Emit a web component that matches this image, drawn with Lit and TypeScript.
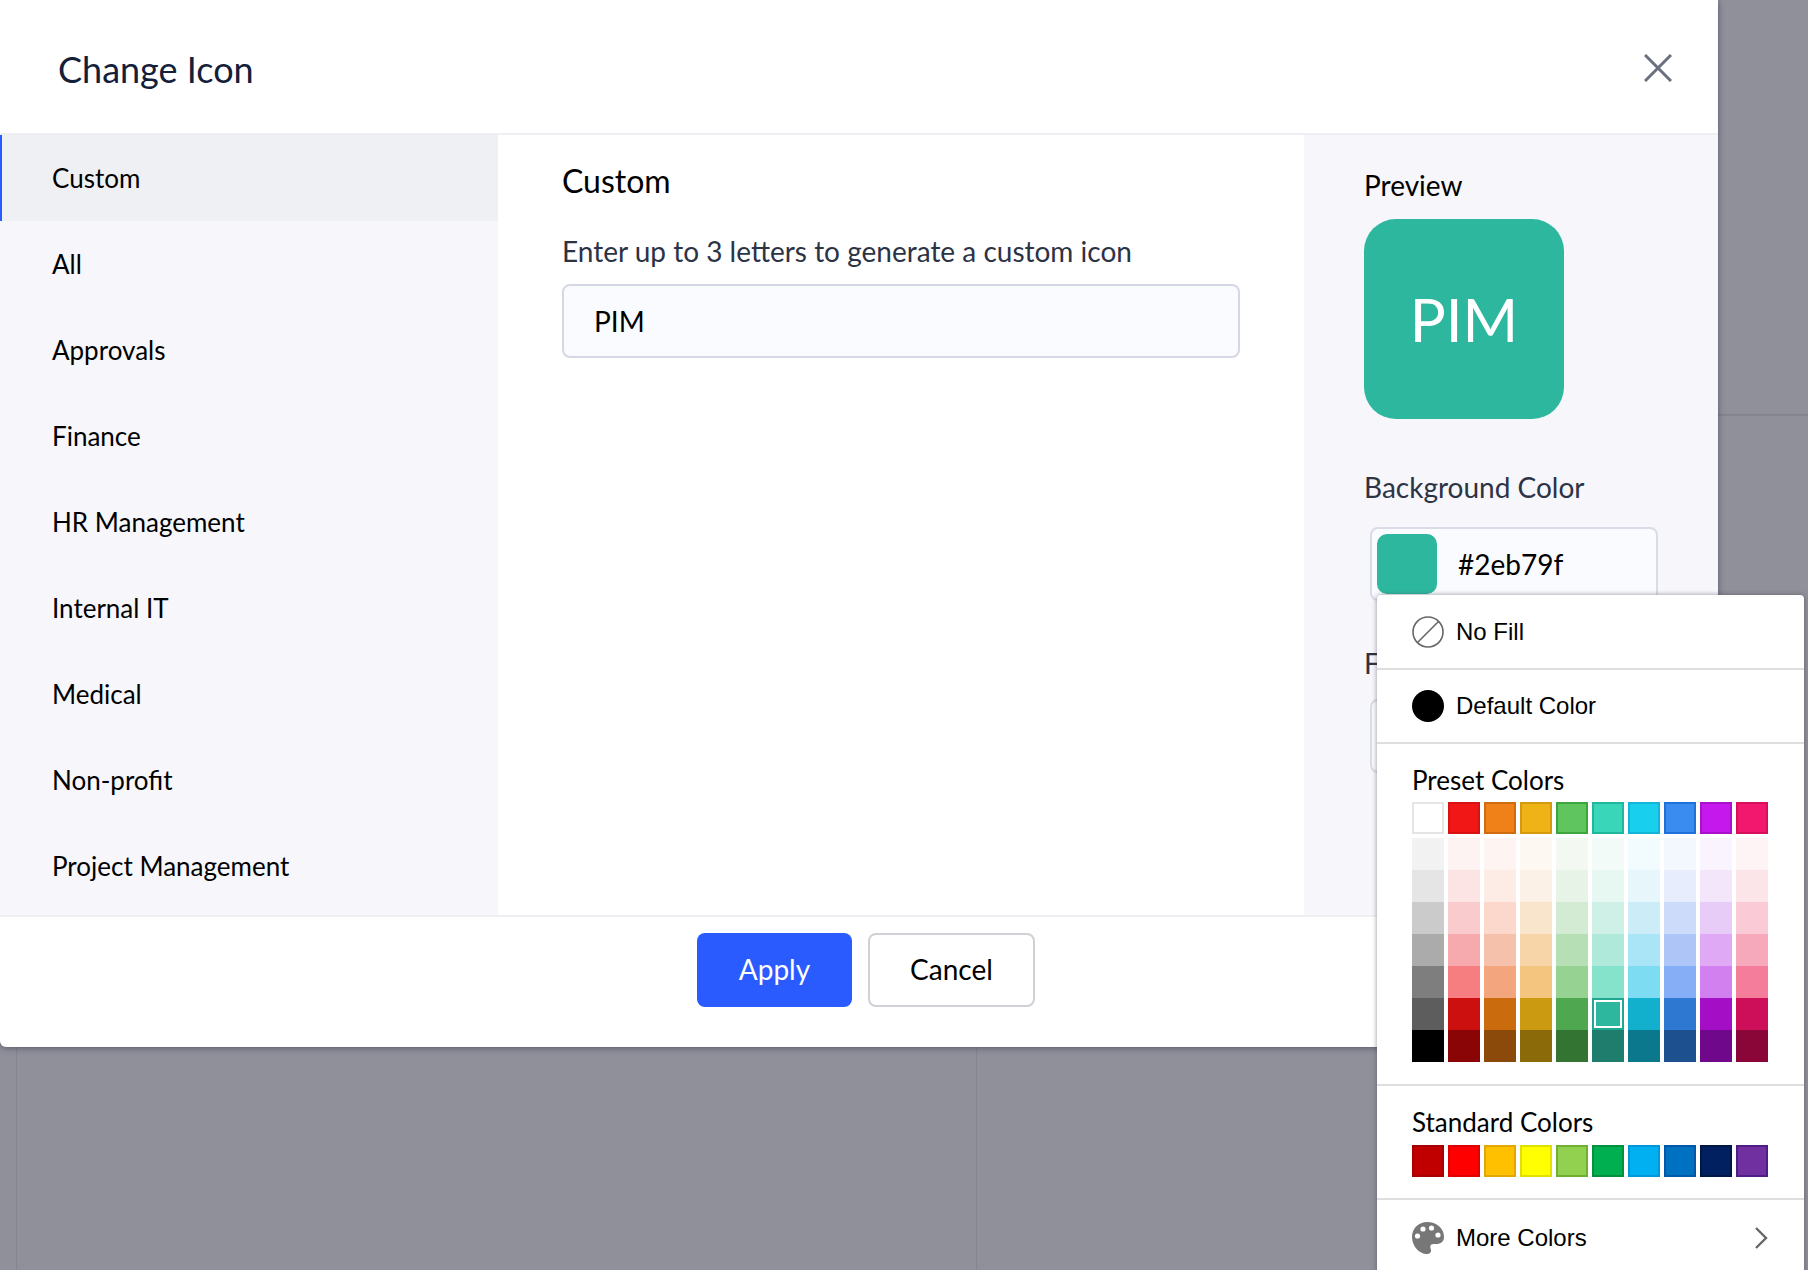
import { LitElement, html, css } from "lit";
import { customElement } from "lit/decorators.js";

const CATS = ["Custom","All","Approvals","Finance","HR Management","Internal IT","Medical","Non-profit","Project Management"];
const TOP = ["#ffffff","#f21717","#f08018","#efb318","#5fc55e","#3ad6b9","#18cfee","#3b8cf0","#c518ec","#f2186e"];
const TOP_B = ["#e5e5e5","#d81212","#d06c10","#d49a0d","#3ca63c","#20b89c","#10b5d8","#1f6fd8","#a810cc","#d80f5c"];
const ROWS = [
 ["#f2f2f2","#fef3f3","#fef4f2","#fdf8f1","#f3f9f2","#f2fbf8","#f2fbfd","#f3f7fe","#f9f4fd","#fef3f5"],
 ["#e5e5e5","#fce4e5","#fcece5","#fcf1e6","#e8f3e8","#e7f7f1","#e6f6fb","#e7edfc","#f3e6fb","#fbe5e9"],
 ["#cbcbcb","#facbcd","#fcd8cc","#f9e4cc","#d3ead3","#cff0e6","#ccecf8","#ccdbfa","#e8ccf8","#facbd6"],
 ["#ababab","#f7aaad","#f6c1ab","#f7d5a8","#b6dfb6","#afe9d9","#a9e4f7","#aec6f7","#dfa9f5","#f6a9ba"],
 ["#7e7e7e","#f67e80","#f3a57e","#f3c57f","#96d392","#85e2cb","#7ddbf2","#85aef6","#d27ff0","#f47d9b"],
 ["#5d5d5d","#cc1010","#ca6c0e","#cb9a10","#4fa84f","#2eb79f","#12b0cc","#2e78d2","#a40fc6","#cc0f58"],
 ["#000000","#8a0606","#8b4a09","#8b6a09","#347433","#1e7d6c","#0b788d","#1c508e","#6f088a","#8a0639"],
];
const STD = ["#c00000","#ff0000","#ffc000","#ffff00","#92d050","#00b050","#00b0f0","#0070c0","#002060","#7030a0"];
const STD_B = ["#a80000","#e00000","#e0a800","#e0e000","#70b030","#009040","#0098d8","#0058a8","#001848","#501c88"];

@customElement("app-root")
export class AppRoot extends LitElement {
  static styles = css`
    :host { display: block; position: relative; width: 1808px; height: 1270px; overflow: hidden; background: #90909b; font-family: Lato, "Liberation Sans", sans-serif; color: #000; }
    .backdrop { display: grid; grid-template-columns: 17px 960px 1fr; grid-template-rows: 416px 1fr; height: 100%; }
    .backdrop div { border-right: 1px solid #85858f; }
    .backdrop .top { grid-column: 1 / -1; border-right: 0; border-bottom: 2px solid #85858f; }
    .backdrop .last { border-right: 0; }
    .modal { position: absolute; left: 0; top: 0; width: 1718px; height: 1047px; background: #fff; border-bottom-left-radius: 6px; border-bottom-right-radius: 6px; display: flex; flex-direction: column; box-shadow: 0 1px 6px rgba(40,40,60,.55); }
    .head { height: 133px; flex: none; box-sizing: border-box; display: flex; align-items: center; justify-content: space-between; padding: 6px 46px 0 58px; }
    .head h1 { margin: 0 0 2px; font-size: 36px; line-height: 44px; font-weight: 400; color: #14203a; }
    .close { display: block; width: 28px; height: 28px; margin-top: -4px; }
    .body { flex: 1; display: flex; border-top: 2px solid #eeeef3; border-bottom: 2px solid #eeeef3; min-height: 0; }
    .side { width: 498px; flex: none; background: #f6f6fb; overflow: hidden; }
    .item { height: 86px; box-sizing: border-box; padding-left: 52px; display: flex; align-items: center; font-size: 26px; }
    .item.on { background: #eff0f4; border-left: 2px solid #2a5bff; padding-left: 50px; }
    .main { flex: 1; padding: 26px 64px 0 64px; box-sizing: border-box; min-width: 0; }
    .main h2 { margin: 0; font-size: 32px; line-height: 40px; font-weight: 400; }
    .main label { display: block; margin-top: 32px; font-size: 28px; line-height: 36px; color: #2c3345; }
    .field { margin-top: 15px; height: 74px; box-sizing: border-box; border: 2px solid #d5d8e4; border-radius: 8px; background: #fafbfe; padding-left: 30px; display: flex; align-items: center; font-size: 28px; }
    .right { width: 414px; flex: none; background: #f6f6fb; padding: 32px 0 0 60px; box-sizing: border-box; }
    .pv { font-size: 28px; line-height: 36px; }
    .tile { margin-top: 16px; width: 200px; height: 200px; border-radius: 32px; background: #2eb79f; color: #fff; display: flex; align-items: center; justify-content: center; font-size: 60px; }
    .lab { margin-top: 50px; font-size: 28px; line-height: 36px; color: #2c3345; }
    .lab.second { margin-top: 44px; }
    .input { margin: 22px 0 0 6px; width: 288px; height: 74px; box-sizing: border-box; border: 2px solid #d9dbe6; border-radius: 8px; background: #fafbfe; padding: 5px; display: flex; align-items: center; gap: 21px; font-size: 28px; }
    .input.second { margin-top: 18px; }
    .chip { width: 60px; height: 60px; border-radius: 10px; background: #2eb79f; flex: none; }
    .foot { flex: none; height: 130px; box-sizing: border-box; display: flex; justify-content: center; gap: 16px; padding: 16px 0 0 14px; }
    .btn { height: 74px; box-sizing: border-box; border-radius: 8px; display: flex; align-items: center; justify-content: center; font-size: 28px; padding-bottom: 2px; }
    .apply { width: 155px; background: #2a5bff; color: #fff; }
    .cancel { width: 167px; background: #fff; border: 2px solid #d0d0d6; }
    .pop { position: absolute; left: 1377px; top: 595px; width: 427px; height: 690px; box-sizing: border-box; background: #fff; border-radius: 4px 4px 0 0; box-shadow: 0 0 5px rgba(60,60,70,.55); }
    .row { display: flex; align-items: center; gap: 12px; padding-left: 35px; font-family: "Liberation Sans", Arial, sans-serif; font-size: 24px; }
    .r1 { height: 75px; box-sizing: border-box; border-bottom: 2px solid #dedede; }
    .r2 { height: 74px; box-sizing: border-box; border-bottom: 2px solid #dedede; }
    .ico { width: 32px; height: 32px; flex: none; display: block; }
    .group { padding: 18px 0 0 35px; box-sizing: border-box; }
    .g1 { height: 342px; border-bottom: 2px solid #dedede; }
    .g2 { height: 114px; border-bottom: 2px solid #dedede; }
    .gt { font-size: 26px; line-height: 36px; height: 36px; white-space: nowrap; }
    .g1 .gt { height: 40px; }
    .g2 .gt { margin-bottom: 5px; }
    .pal { display: grid; grid-template-columns: repeat(10, 32px); column-gap: 4px; }
    .sw { width: 32px; height: 32px; box-sizing: border-box; }
    .sw.b { border: 2px solid; }
    .sw.gapb { margin-bottom: 4px; }
    .sw.sel { background: #1fa78f; padding: 2px; }
    .sel-in { width: 28px; height: 28px; box-sizing: border-box; border: 2px solid #fff; background: #2eb79f; }
    .more { height: 70px; box-sizing: border-box; padding-right: 36px; padding-top: 6px; }
    .more span { flex: 1; }
    .chev { width: 14px; height: 22px; flex: none; display: block; }
  `;

  render() {
    return html`
      <div class="backdrop"><div class="top"></div><div></div><div></div><div class="last"></div></div>
      <div class="modal">
        <div class="head">
          <h1>Change Icon</h1>
          <svg class="close" viewBox="0 0 28 28" fill="none" stroke="#6b7080" stroke-width="3"><path d="M1 1 27 27M27 1 1 27"/></svg>
        </div>
        <div class="body">
          <div class="side">${CATS.map((c, i) => html`<div class="item ${i === 0 ? "on" : ""}">${c}</div>`)}</div>
          <div class="main">
            <h2>Custom</h2>
            <label>Enter up to 3 letters to generate a custom icon</label>
            <div class="field">PIM</div>
          </div>
          <div class="right">
            <div class="pv">Preview</div>
            <div class="tile">PIM</div>
            <div class="lab">Background Color</div>
            <div class="input"><div class="chip"></div>#2eb79f</div>
            <div class="lab second">Font Color</div>
            <div class="input second"></div>
          </div>
        </div>
        <div class="foot">
          <div class="btn apply">Apply</div>
          <div class="btn cancel">Cancel</div>
        </div>
      </div>
      <div class="pop">
        <div class="row r1">
          <svg class="ico" viewBox="0 0 32 32" fill="none" stroke="#666" stroke-width="1.6"><circle cx="16" cy="16" r="15"/><path d="M5.5 26.5 26.5 5.5"/></svg>
          No Fill
        </div>
        <div class="row r2">
          <svg class="ico" viewBox="0 0 32 32"><circle cx="16" cy="16" r="16" fill="#000"/></svg>
          Default Color
        </div>
        <div class="group g1">
          <div class="gt">Preset Colors</div>
          <div class="pal">
            ${TOP.map((c, i) => html`<div class="sw b gapb" style="background:${c};border-color:${TOP_B[i]}"></div>`)}
            ${ROWS.flatMap((r, ri) => r.map((c, i) => ri === 5 && i === 5
              ? html`<div class="sw sel"><div class="sel-in"></div></div>`
              : html`<div class="sw" style="background:${c}"></div>`))}
          </div>
        </div>
        <div class="group g2">
          <div class="gt">Standard Colors</div>
          <div class="pal">${STD.map((c, i) => html`<div class="sw b" style="background:${c};border-color:${STD_B[i]}"></div>`)}</div>
        </div>
        <div class="row more">
          <svg class="ico" viewBox="0 0 32 32"><path fill="#777" d="M15 0C6.700 0 0 6.600 0 15c0 8.700 6.800 17 15 17 3 0 4.400-1.700 4-4-.5-2.400-1.200-3.500-.3-4.800 1-1.400 3-1.200 5.300-1.200 4.800 0 8-2.300 8-7C32 6.300 24.600 0 15 0Z"/><g fill="#fff"><circle cx="5.500" cy="14" r="2.600"/><circle cx="11" cy="7" r="2.600"/><circle cx="19.500" cy="6" r="2.600"/><circle cx="26" cy="13" r="2.600"/></g></svg>
          <span>More Colors</span>
          <svg class="chev" viewBox="0 0 14 22" fill="none" stroke="#666" stroke-width="2.400"><path d="M2 1 12 11 2 21"/></svg>
        </div>
      </div>
    `;
  }
}
